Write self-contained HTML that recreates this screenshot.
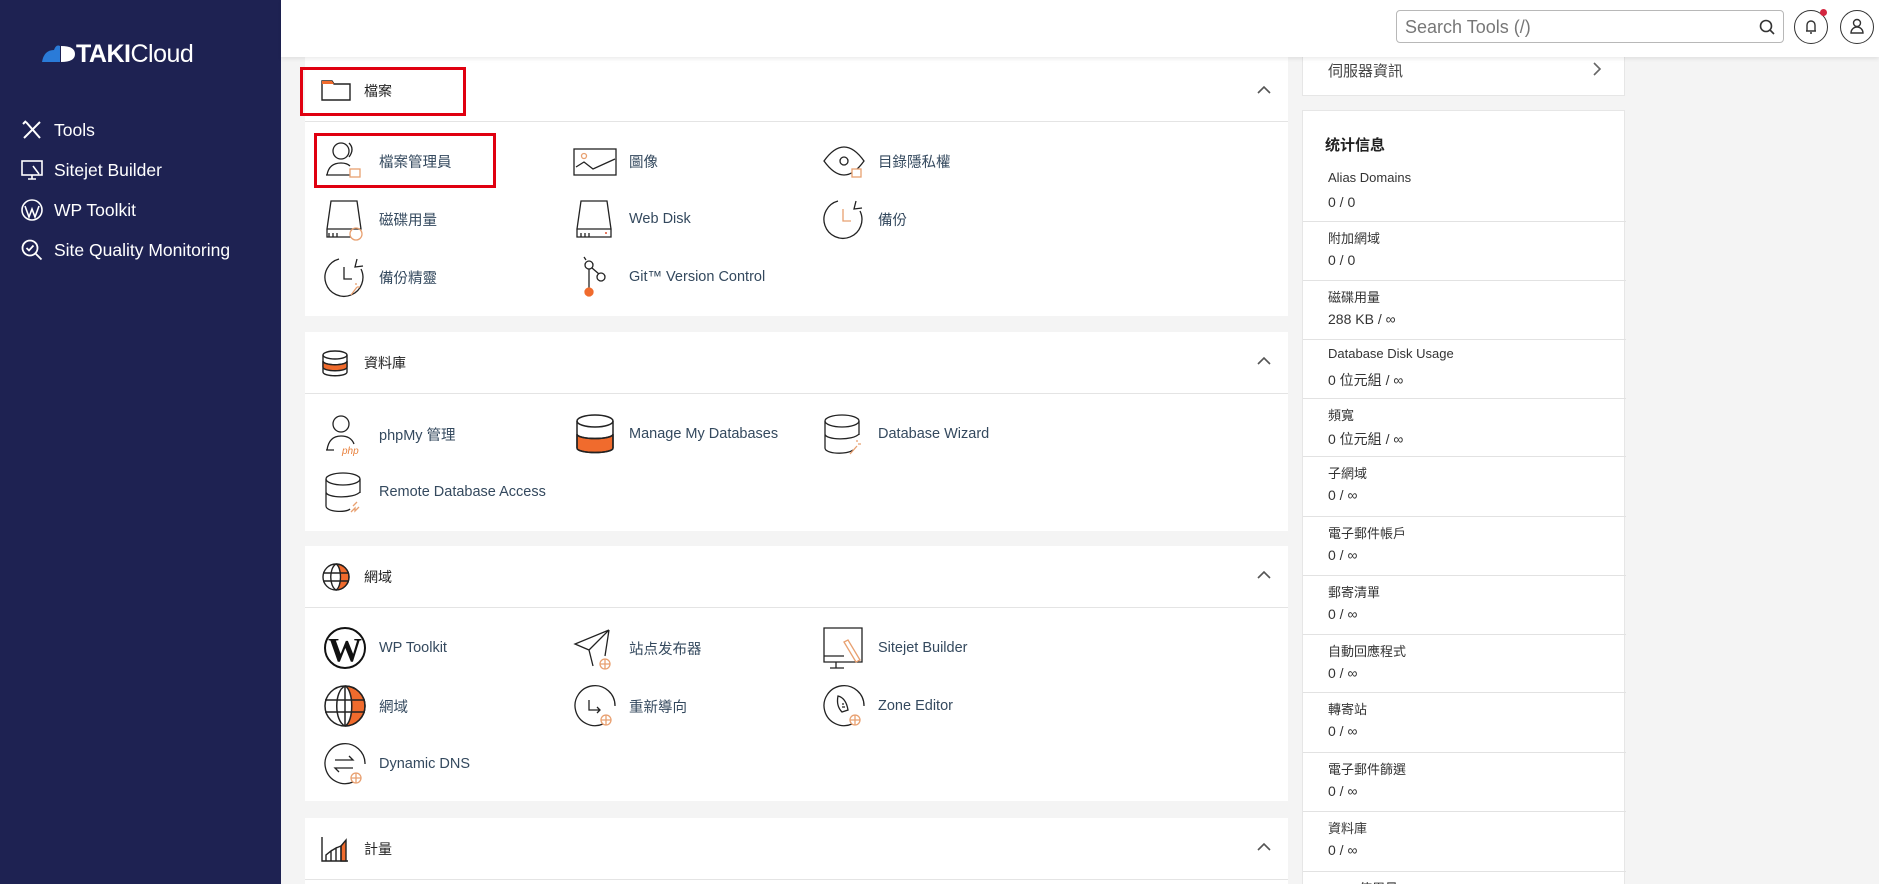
<!DOCTYPE html>
<html><head><meta charset="utf-8">
<style>
*{margin:0;padding:0;box-sizing:border-box}
html,body{width:1879px;height:884px;overflow:hidden}
body{background:#f4f4f4;font-family:"Liberation Sans","Noto Sans CJK TC",sans-serif;position:relative;color:#293a4a}
.side{position:absolute;left:0;top:0;width:281px;height:884px;background:#1e2252}
.logo{position:absolute;left:42px;top:40px;color:#fff;font-size:25px;letter-spacing:-0.5px}
.logo b{font-weight:bold}
.nav{position:absolute;left:20px;color:#fff;font-size:17.5px;display:flex;align-items:center}
.nav svg{margin-right:10px}
.hdr{position:absolute;left:281px;top:0;right:0;height:57px;background:#fff;box-shadow:0 2px 4px rgba(0,0,0,.08);z-index:5}
.search{position:absolute;left:1115px;top:10px;width:388px;height:33px;border:1px solid #b8b8b8;border-radius:4px;font-size:18px;color:#777;padding:6px 8px}
.circ{position:absolute;top:10px;width:34px;height:34px;border:1px solid #333;border-radius:50%}
.panel{position:absolute;left:305px;width:983px;background:#fff}
.ph{height:62px;border-bottom:1px solid #e4e4e4;position:relative}
.ph .t{position:absolute;left:59px;top:21px;font-size:14px;color:#222}
.ph .ic{position:absolute;left:16px;top:16px}
.chev{position:absolute;left:952px;top:24px}
.it{position:absolute;display:flex;align-items:center;font-size:14.5px;color:#34495e}
.it svg{width:44px;height:44px;margin-right:12px;flex:none}
.red{position:absolute;border:3px solid #e00010;z-index:6}
.rp{position:absolute;left:1302px;width:323px;background:#fff;border:1px solid #e6e6e6}
.st{position:absolute;left:0;width:323px;border-top:1px solid #e2e2e2;font-size:13px;color:#333}
.st span{position:absolute;left:25px}
</style></head><body>
<div class="side">
 <div class="logo"><svg width="34" height="22" viewBox="0 0 34 22" style="vertical-align:-2px"><path d="M0 20 Q2 8 12 8 Q14 2 18 4 L18 20Z" fill="#2a7bd8"/><path d="M19 4 Q33 4 33 12 Q33 20 19 20Z" fill="#fff"/></svg><b>TAKI</b>Cloud</div>
 <div class="nav" style="top:118px"><svg width="24" height="24" viewBox="0 0 24 24" fill="none" stroke="#fff" stroke-width="2"><path d="M4 20 20 4M6 4l14 16M3 6l3-3"/></svg>Tools</div>
 <div class="nav" style="top:158px"><svg width="24" height="24" viewBox="0 0 24 24" fill="none" stroke="#fff" stroke-width="1.6"><rect x="2" y="3" width="20" height="14"/><path d="M8 21h8M12 17v4M13 8l6 8"/></svg>Sitejet Builder</div>
 <div class="nav" style="top:198px"><svg width="24" height="24" viewBox="0 0 24 24" fill="none" stroke="#fff" stroke-width="1.6"><circle cx="12" cy="12" r="10"/><path d="M5 8l4 11 3-8 3 8 4-11"/></svg>WP Toolkit</div>
 <div class="nav" style="top:238px"><svg width="24" height="24" viewBox="0 0 24 24" fill="none" stroke="#fff" stroke-width="1.8"><circle cx="10" cy="10" r="7.5"/><path d="M6.5 10l2.5 2.5 4.5-5M15.5 15.5l6 6"/></svg>Site Quality Monitoring</div>
</div>
<div class="hdr">
 <div class="search">Search Tools (/)<svg style="position:absolute;right:8px;top:8px" width="16" height="16" viewBox="0 0 16 16" fill="none" stroke="#333" stroke-width="1.6"><circle cx="7" cy="7" r="5.5"/><path d="M11 11l4 4"/></svg></div>
 <div class="circ" style="left:1513px"><svg width="32" height="32" viewBox="0 0 32 32" fill="none" stroke="#333" stroke-width="1.4"><path d="M11 20h10M12 20v-6a4 4 0 018 0v6M15 22h2"/></svg><div style="position:absolute;left:25px;top:-2px;width:7px;height:7px;border-radius:50%;background:#d3263f"></div></div>
 <div class="circ" style="left:1559px"><svg width="32" height="32" viewBox="0 0 32 32" fill="none" stroke="#333" stroke-width="1.4"><circle cx="16" cy="12" r="3.5"/><path d="M10 22a6 6 0 0112 0z"/></svg></div>
</div>

<div class="red" style="left:300px;top:67px;width:166px;height:49px"></div>
<div class="red" style="left:314px;top:133px;width:182px;height:55px"></div>

<div class="panel" style="top:57px;height:259px">
 <div class="ph" style="height:65px"><svg class="ic" style="top:20px" width="30" height="24" viewBox="0 0 30 24" fill="none" stroke="#222" stroke-width="1.4"><path d="M1 4h10l2 3h16v16H1z"/><path d="M1 4h10l2 3H1z" fill="#f06b2d" stroke="none"/></svg><span class="t" style="top:24px">檔案</span><svg class="chev" style="top:28px" width="14" height="9" viewBox="0 0 14 9" fill="none" stroke="#555" stroke-width="1.6"><path d="M1 8l6-6 6 6"/></svg></div>
</div>
<div class="it" style="left:323px;top:139px"><svg viewBox="0 0 44 44" fill="none" stroke="#222" stroke-width="1.3"><circle cx="18" cy="12" r="8"/><path d="M4 36q2-12 14-12 6 0 9 3M3 36h24M26 4q6 6 0 14"/><rect x="27" y="30" width="10" height="8" stroke="#e8a070"/></svg>檔案管理員</div>
<div class="it" style="left:573px;top:139px"><svg viewBox="0 0 44 44" fill="none" stroke="#222" stroke-width="1.3"><rect x="1" y="10" width="42" height="26"/><circle cx="11" cy="17" r="2.5" stroke="#e8a070"/><path d="M3 28l8-5 9 7 22-10"/></svg>圖像</div>
<div class="it" style="left:822px;top:139px"><svg viewBox="0 0 44 44" fill="none" stroke="#222" stroke-width="1.3"><path d="M2 22q10-14 20-14t20 14q-10 14-20 14T2 22z"/><circle cx="22" cy="22" r="4"/><rect x="30" y="30" width="9" height="8" stroke="#e8a070" fill="#fff"/></svg>目錄隱私權</div>
<div class="it" style="left:323px;top:197px"><svg viewBox="0 0 44 44" fill="none" stroke="#222" stroke-width="1.3"><path d="M8 4h26l4 28H4z M4 32v8h24M6 36v4M10 36v4M14 36v4"/><circle cx="33" cy="37" r="6" stroke="#e8a070"/></svg>磁碟用量</div>
<div class="it" style="left:573px;top:197px"><svg viewBox="0 0 44 44" fill="none" stroke="#222" stroke-width="1.3"><path d="M8 4h26l4 28H4z M4 32h34v8H4z M8 36v4M12 36v4M16 36v4"/><circle cx="33" cy="36" r="1" fill="#e05030" stroke="none"/></svg>Web Disk</div>
<div class="it" style="left:822px;top:197px"><svg viewBox="0 0 44 44" fill="none" stroke="#222" stroke-width="1.3"><path d="M16 4A19 19 0 1038 14M34 4l-2 8 8-1"/><path d="M21 12v12h8" stroke="#e8a070"/></svg>備份</div>
<div class="it" style="left:323px;top:255px"><svg viewBox="0 0 44 44" fill="none" stroke="#222" stroke-width="1.3"><path d="M16 4A19 19 0 1038 14M34 4l-2 8 8-1M21 12v12h8"/><path d="M28 40l6-8M34 32h3M33 28v2" stroke="#e8a070"/></svg>備份精靈</div>
<div class="it" style="left:573px;top:255px"><svg viewBox="0 0 44 44" fill="none" stroke="#222" stroke-width="1.3"><circle cx="16" cy="10" r="4"/><circle cx="28" cy="22" r="4"/><path d="M16 14v20M19 13l7 6M13 5l-2-3"/><circle cx="16" cy="37" r="4" fill="#f06b2d" stroke="#f06b2d"/></svg>Git™ Version Control</div>

<div class="panel" style="top:332px;height:199px">
 <div class="ph"><svg class="ic" style="top:18px" width="28" height="28" viewBox="0 0 28 28" fill="none" stroke="#222" stroke-width="1.4"><ellipse cx="14" cy="5" rx="12" ry="4"/><path d="M2 5v17c0 5 24 5 24 0V5M2 11c0 5 24 5 24 0" /><path d="M2 11c0 5 24 5 24 0v6c0 5-24 5-24 0z" fill="#f06b2d"/></svg><span class="t">資料庫</span><svg class="chev" width="14" height="9" viewBox="0 0 14 9" fill="none" stroke="#555" stroke-width="1.6"><path d="M1 8l6-6 6 6"/></svg></div>
</div>
<div class="it" style="left:323px;top:412px"><svg viewBox="0 0 44 44" fill="none" stroke="#222" stroke-width="1.3"><circle cx="18" cy="12" r="8"/><path d="M4 38q2-14 14-14 10 0 13 8M3 38h8"/><text x="19" y="42" font-size="10" font-style="italic" fill="#e8803c" stroke="none" font-family="Liberation Sans">php</text></svg>phpMy 管理</div>
<div class="it" style="left:573px;top:412px"><svg viewBox="0 0 44 44" fill="none" stroke="#222" stroke-width="1.5"><path d="M4 22c0 6 36 6 36 0v14c0 6-36 6-36 0z" fill="#f06b2d"/><ellipse cx="22" cy="9" rx="18" ry="6"/><path d="M4 9v27c0 6 36 6 36 0V9M4 22c0 6 36 6 36 0"/></svg>Manage My Databases</div>
<div class="it" style="left:822px;top:412px"><svg viewBox="0 0 44 44" fill="none" stroke="#222" stroke-width="1.3"><ellipse cx="20" cy="9" rx="17" ry="6"/><path d="M3 9v27c0 6 22 7 28 2M37 9v14M3 22c0 6 28 7 34 0"/><path d="M28 42l7-8M36 32h3M35 28v2" stroke="#e8a070"/></svg>Database Wizard</div>
<div class="it" style="left:323px;top:470px"><svg viewBox="0 0 44 44" fill="none" stroke="#222" stroke-width="1.3"><ellipse cx="20" cy="9" rx="17" ry="6"/><path d="M3 9v27c0 6 20 7 24 3M37 9v14M3 22c0 6 28 7 34 0"/><path d="M28 42l4-4 0 3 4-4M30 36l4-4" stroke="#e8a070"/></svg>Remote Database Access</div>

<div class="panel" style="top:546px;height:255px">
 <div class="ph"><svg class="ic" style="top:16px" width="30" height="30" viewBox="0 0 30 30" fill="none" stroke="#222" stroke-width="1.4"><path d="M15 2a13 13 0 010 26c6-3 6-23 0-26z" fill="#f06b2d"/><circle cx="15" cy="15" r="13"/><path d="M15 2c-7 4-7 22 0 26M2 11h26M2 19h26"/></svg><span class="t">網域</span><svg class="chev" width="14" height="9" viewBox="0 0 14 9" fill="none" stroke="#555" stroke-width="1.6"><path d="M1 8l6-6 6 6"/></svg></div>
</div>
<div class="it" style="left:323px;top:626px"><svg viewBox="0 0 44 44"><circle cx="22" cy="22" r="20" fill="#fff" stroke="#111" stroke-width="2"/><text x="22" y="35" text-anchor="middle" font-size="34" font-weight="bold" font-family="Liberation Serif" fill="#111">W</text></svg>WP Toolkit</div>
<div class="it" style="left:573px;top:626px"><svg viewBox="0 0 44 44" fill="none" stroke="#222" stroke-width="1.3"><path d="M36 4L2 18l14 6 4 16M36 4L16 24M36 4l-4 26"/><circle cx="32" cy="38" r="5" stroke="#e8a070" fill="#fff"/><path d="M27 38h10M32 33v10" stroke="#e8a070"/></svg>站点发布器</div>
<div class="it" style="left:822px;top:626px"><svg viewBox="0 0 44 44" fill="none" stroke="#222" stroke-width="1.3"><path d="M2 2h38v34H2zM2 30h20M14 36v6M8 42h14"/><path d="M22 16l12 20 4-2-12-20z" stroke="#e8a070"/></svg>Sitejet Builder</div>
<div class="it" style="left:323px;top:684px"><svg viewBox="0 0 44 44" fill="none" stroke="#222" stroke-width="1.5"><path d="M22 2a20 20 0 010 40c9-4 9-36 0-40z" fill="#f06b2d"/><circle cx="22" cy="22" r="20"/><path d="M22 2c-11 5-11 35 0 40M2 16h40M2 28h40M22 2v40"/></svg>網域</div>
<div class="it" style="left:573px;top:684px"><svg viewBox="0 0 44 44" fill="none" stroke="#222" stroke-width="1.3"><path d="M30 40A20 20 0 1142 22"/><path d="M16 16v10h10M24 23l3 3-3 3"/><circle cx="33" cy="36" r="5" stroke="#e8a070" fill="#fff"/><path d="M28 36h10M33 31v10" stroke="#e8a070"/></svg>重新導向</div>
<div class="it" style="left:822px;top:684px"><svg viewBox="0 0 44 44" fill="none" stroke="#222" stroke-width="1.3"><path d="M30 40A20 20 0 1142 22"/><path d="M16 12q8 2 10 14l-6 2q-6-6-4-16zM20 20h2M20 23h3"/><circle cx="33" cy="36" r="5" stroke="#e8a070" fill="#fff"/><path d="M28 36h10M33 31v10" stroke="#e8a070"/></svg>Zone Editor</div>
<div class="it" style="left:323px;top:742px"><svg viewBox="0 0 44 44" fill="none" stroke="#222" stroke-width="1.3"><path d="M30 40A20 20 0 1142 22"/><path d="M12 18h18l-4-4M30 26H12l4 4"/><circle cx="33" cy="36" r="5" stroke="#e8a070" fill="#fff"/><path d="M28 36h10M33 31v10" stroke="#e8a070"/></svg>Dynamic DNS</div>

<div class="panel" style="top:818px;height:70px">
 <div class="ph"><svg class="ic" style="top:18px" width="28" height="26" viewBox="0 0 28 26" fill="none" stroke="#222" stroke-width="1.4"><path d="M1 1v24h26"/><path d="M20 10l5-6v21h-5z" fill="#f06b2d"/><path d="M5 25v-6l5-4v10M10 15l5-3v13M15 12l5-2v15"/></svg><span class="t">計量</span><svg class="chev" width="14" height="9" viewBox="0 0 14 9" fill="none" stroke="#555" stroke-width="1.6"><path d="M1 8l6-6 6 6"/></svg></div>
</div>

<div class="rp" style="top:40px;height:56px;border-top:none"><span style="position:absolute;left:25px;top:20px;font-size:15px;color:#444">伺服器資訊</span><svg style="position:absolute;left:290px;top:22px" width="9" height="14" viewBox="0 0 9 14" fill="none" stroke="#666" stroke-width="1.6"><path d="M1 1l6 6-6 6"/></svg></div>
<div class="rp" style="top:110px;height:790px">
 <div style="position:absolute;left:22px;top:23px;font-size:15px;font-weight:bold;color:#222">统计信息</div>
 <div class="st" style="top:0;border:none"><span style="top:59px">Alias Domains</span><span style="top:83px;font-size:14px">0 / 0</span></div>
 <div class="st" style="top:110px"><span style="top:6px">附加網域</span><span style="top:30px;font-size:14px">0 / 0</span></div>
 <div class="st" style="top:169px"><span style="top:6px">磁碟用量</span><span style="top:30px;font-size:14px">288 KB / ∞</span></div>
 <div class="st" style="top:228px"><span style="top:6px">Database Disk Usage</span><span style="top:30px;font-size:14px">0 位元組 / ∞</span></div>
 <div class="st" style="top:287px"><span style="top:6px">頻寬</span><span style="top:30px;font-size:14px">0 位元組 / ∞</span></div>
 <div class="st" style="top:345px"><span style="top:6px">子網域</span><span style="top:30px;font-size:14px">0 / ∞</span></div>
 <div class="st" style="top:405px"><span style="top:6px">電子郵件帳戶</span><span style="top:30px;font-size:14px">0 / ∞</span></div>
 <div class="st" style="top:464px"><span style="top:6px">郵寄清單</span><span style="top:30px;font-size:14px">0 / ∞</span></div>
 <div class="st" style="top:523px"><span style="top:6px">自動回應程式</span><span style="top:30px;font-size:14px">0 / ∞</span></div>
 <div class="st" style="top:581px"><span style="top:6px">轉寄站</span><span style="top:30px;font-size:14px">0 / ∞</span></div>
 <div class="st" style="top:641px"><span style="top:6px">電子郵件篩選</span><span style="top:30px;font-size:14px">0 / ∞</span></div>
 <div class="st" style="top:700px"><span style="top:6px">資料庫</span><span style="top:30px;font-size:14px">0 / ∞</span></div>
 <div class="st" style="top:760px"><span style="top:6px">CPU 使用量</span></div>
</div>
</body></html>
